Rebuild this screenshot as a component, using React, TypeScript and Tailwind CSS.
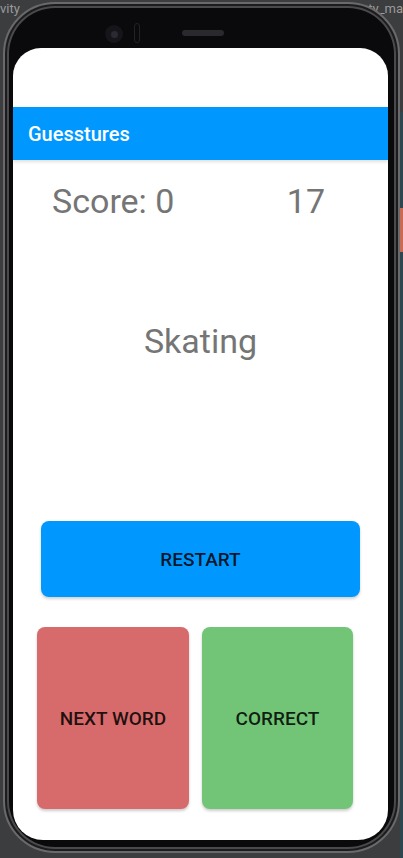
export default function App() {
  return (
    <div
      className="relative w-[403px] h-[858px] overflow-hidden bg-[#3b3d3f]"
      style={{ fontFamily: 'Roboto, "Noto Sans", sans-serif' }}
    >
      {/* IDE tab fragments behind the emulator */}
      <span className="absolute left-0 top-[2px] text-[13px] leading-none text-[#9a9a9a]">vity</span>
      <span className="absolute right-0 top-[2px] text-[13px] leading-none text-[#9a9a9a]">ty_ma</span>
      <div className="absolute right-0 top-[112px] w-[3px] h-[746px] bg-[#2d4650]" />
      <div className="absolute right-0 top-[208px] w-[3px] h-[44px] bg-[#c96a55]" />

      {/* phone body */}
      <div className="relative mx-[3px] mt-[2px] h-[851px] rounded-[52px] border-[2px] border-[#6a6a6c] bg-[#0a0a0c] shadow-[inset_0_0_0_2px_#1c1c1e,inset_0_0_0_4px_#4a4a4c] px-[8px] pt-[44px]">
        {/* camera + speaker */}
        <div className="absolute left-[100px] top-[21px] w-[18px] h-[18px] rounded-full bg-[#16161a] flex items-center justify-center">
          <div className="w-[7px] h-[7px] rounded-full bg-[#2a2a33]" />
        </div>
        <div className="absolute left-[129px] top-[19px] w-[6px] h-[20px] rounded-full border border-[#222226]" />
        <div className="absolute left-[177px] top-[26px] w-[42px] h-[6px] rounded-full bg-[#2a2a2e]" />

        {/* screen */}
        <div className="w-[375px] h-[792px] rounded-t-[28px] rounded-b-[30px] bg-white overflow-hidden flex flex-col">
          <div className="h-[59px]" />
          <div className="h-[53px] bg-[#0098ff] px-[15px] flex items-center shadow-[0_2px_3px_rgba(0,0,0,0.12)]">
            <span className="text-[20px] font-medium text-white">Guesstures</span>
          </div>

          <div className="mt-[21px] flex justify-between pl-[39px] pr-[63px] text-[34px] leading-[40px] text-[#757575]">
            <span>Score: 0</span>
            <span>17</span>
          </div>

          <div className="mt-[100px] text-center text-[34px] leading-[40px] text-[#757575]">Skating</div>

          <div className="mt-[160px] mx-[28px] h-[76px] rounded-[8px] bg-[#0098ff] flex items-center justify-center shadow-[0_2px_3px_rgba(0,0,0,0.18)]">
            <span className="pt-[3px] text-[19px] font-medium text-black/85">RESTART</span>
          </div>

          <div className="mt-[30px] ml-[24px] flex gap-[13px]">
            <div className="w-[152px] h-[182px] rounded-[8px] bg-[#d76b6b] flex items-center justify-center shadow-[0_2px_3px_rgba(0,0,0,0.2)]">
              <span className="pt-[2px] text-[19px] font-medium text-black/85">NEXT WORD</span>
            </div>
            <div className="w-[151px] h-[182px] rounded-[8px] bg-[#72c576] flex items-center justify-center shadow-[0_2px_3px_rgba(0,0,0,0.2)]">
              <span className="pt-[2px] text-[19px] font-medium text-black/85">CORRECT</span>
            </div>
          </div>
        </div>
      </div>
    </div>
  );
}
